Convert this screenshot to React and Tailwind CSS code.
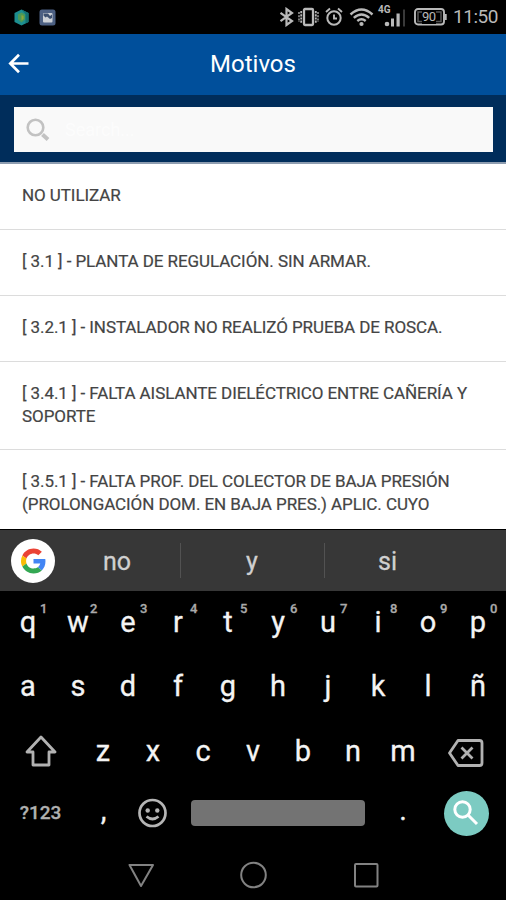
const ROWS = [
  { h: 'h-[66px]', lines: ['NO UTILIZAR'] },
  { h: 'h-[66px]', lines: ['[ 3.1 ] - PLANTA DE REGULACIÓN. SIN ARMAR.'] },
  { h: 'h-[66px]', lines: ['[ 3.2.1 ] - INSTALADOR NO REALIZÓ PRUEBA DE ROSCA.'] },
  { h: 'h-[88px]', lines: ['[ 3.4.1 ] - FALTA AISLANTE DIELÉCTRICO ENTRE CAÑERÍA Y', 'SOPORTE'] },
  { h: 'h-[79px]', last: true, lines: ['[ 3.5.1 ] - FALTA PROF. DEL COLECTOR DE BAJA PRESIÓN', '(PROLONGACIÓN DOM. EN BAJA PRES.) APLIC. CUYO'] },
];

const TOP = ['q', 'w', 'e', 'r', 't', 'y', 'u', 'i', 'o', 'p'];
const HOME = ['a', 's', 'd', 'f', 'g', 'h', 'j', 'k', 'l', 'ñ'];
const BOTTOM = ['z', 'x', 'c', 'v', 'b', 'n', 'm'];

function StatusBar() {
  return (
    <div className="flex h-[34px] items-center bg-black pl-[14px] text-[#b9b9b9]">
      <svg width="15" height="17" viewBox="0 0 15 17">
        <path d="M7.5 .5 14.5 4v9l-7 3.5-7-3.5V4z" fill="#1d8e90" />
        <path d="M7.5 .5 14.5 4v9l-3 1.5V5z" fill="#14706f" />
        <path d="M7.5 3.500 11 5.500v5l-3.500 3-3.500-3v-5z" fill="#4e9a55" />
        <path d="M7.500 6 9.500 7v3l-2 1.500z" fill="#8fa93a" />
      </svg>
      <svg className="ml-[10px]" width="17" height="17" viewBox="0 0 17 17">
        <rect x=".5" y=".5" width="16" height="16" rx="2.5" fill="#4c6083" />
        <rect x="4" y="4" width="9.500" height="9.500" rx="1" fill="#cbd0d6" />
        <path d="M4.500 4.500H9L11 7 13 5.500V9L11 10 8 7.500 6.500 8.500 4.500 6.500z" fill="#3c5070" />
      </svg>
      <svg className="ml-[223px]" width="16" height="20" viewBox="0 0 16 20" fill="none" stroke="currentColor" strokeWidth="2.200">
        <path d="M1.500 5.800 13 14 7.500 18V2L13 6 1.500 14.200" />
      </svg>
      <svg className="ml-[3px]" width="22" height="20" viewBox="0 0 22 20" fill="none" stroke="currentColor">
        <rect x="6" y="2" width="9" height="16" rx="1" strokeWidth="2.300" />
        <path d="M3.200 4v12M17.800 4v12" strokeWidth="1.800" strokeDasharray="2.200 1" />
        <path d="M1 5v10M20 5v10" strokeWidth="1.300" strokeDasharray="2 1.200" />
      </svg>
      <svg className="ml-[5px]" width="18" height="20" viewBox="0 0 18 20" fill="none" stroke="currentColor">
        <circle cx="9" cy="11" r="6.700" strokeWidth="2" />
        <path d="M9 7.500V11.500h3M1 5l4-3.500M17 5l-4-3.500" strokeWidth="1.900" />
      </svg>
      <svg className="ml-[6px]" width="25" height="20" viewBox="0 0 25 20" fill="none" stroke="currentColor" strokeWidth="2.400">
        <path d="M1.500 7.500Q12.500-2.500 23.500 7.500M4.800 10.800Q12.500 4 20.200 10.800M8.300 14Q12.500 10.500 16.700 14" />
        <circle cx="12.500" cy="17" r="2.100" fill="currentColor" stroke="none" />
      </svg>
      <div className="relative ml-[4px] h-[24px] w-[29px]">
        <span className="absolute left-0 top-0 text-[10px] font-bold leading-[9px]">4G</span>
        <svg className="absolute left-0 top-0" width="29" height="24" viewBox="0 0 29 24" fill="currentColor">
          <circle cx="9" cy="19" r="2.300" />
          <path d="M13 13.500h3v8h-3zM18.500 8.500h3.200v13h-3.200z" />
          <path d="M25 4.500h2v17h-2z" fill="#393939" />
        </svg>
      </div>
      <div className="relative ml-[7px] h-[18px] w-[33px]">
        <svg width="33" height="18" viewBox="0 0 33 18" fill="none" stroke="currentColor">
          <rect x="1" y="1" width="29" height="15.500" rx="3" strokeWidth="1.900" />
          <path d="M31.700 6v6" strokeWidth="2" />
          <path d="M4 4h23v9.500H4z" stroke="#555" strokeWidth="1.500" />
        </svg>
        <span className="absolute left-[8px] top-[2px] bg-black text-[13px] leading-[14px] tracking-[-0.5px]">90</span>
      </div>
      <span className="ml-[6px] text-[19px] leading-[34px] tracking-[-0.45px]">11:50</span>
    </div>
  );
}

function LetterRow({ letters, hints }) {
  return (
    <div className="grid h-16 grid-cols-10 px-[3px]">
      {letters.map((k, i) => (
        <div key={k} className="relative text-center text-[29px] leading-[63px]">
          {k}
          {hints && <span className="absolute left-[37px] top-[11px] text-[13px] font-medium leading-[14px] text-[#aaa]">{(i + 1) % 10}</span>}
        </div>
      ))}
    </div>
  );
}

function Keyboard() {
  return (
    <div className="bg-black text-[#f4f4f4] [-webkit-text-stroke:0.3px_currentColor]">
      <div className="flex h-[62px] items-center border-t border-black bg-[#373737] text-[25px] text-[#d0d0d0]">
        <div className="ml-[11px] flex size-[44px] items-center justify-center rounded-full bg-white">
          <svg width="25" height="26" viewBox="0 0 48 48">
            <path fill="#ea4335" d="M24 9.500c3.540 0 6.710 1.220 9.210 3.600l6.850-6.850C35.900 2.380 30.470 0 24 0 14.620 0 6.510 5.380 2.560 13.220l7.980 6.190C12.430 13.720 17.740 9.500 24 9.500z" />
            <path fill="#4285f4" d="M46.980 24.550c0-1.570-.15-3.090-.38-4.550H24v9.020h12.940c-.58 2.960-2.260 5.480-4.780 7.180l7.730 6c4.510-4.180 7.090-10.360 7.090-17.650z" />
            <path fill="#fbbc05" d="M10.530 28.590c-.48-1.450-.76-2.990-.76-4.590s.27-3.140.76-4.590l-7.980-6.190C.92 16.460 0 20.120 0 24c0 3.880.92 7.540 2.560 10.780l7.970-6.190z" />
            <path fill="#34a853" d="M24 48c6.480 0 11.930-2.130 15.890-5.810l-7.730-6c-2.150 1.450-4.920 2.300-8.160 2.300-6.260 0-11.570-4.220-13.470-9.910l-7.980 6.190C6.510 42.620 14.620 48 24 48z" />
          </svg>
        </div>
        <span className="ml-[2px] w-[123px] pr-[3px] pt-[2px] text-center">no</span>
        <span className="h-[35px] w-px bg-[#525252]" />
        <span className="w-[143px] pr-[1px] pt-[2px] text-center">y</span>
        <span className="h-[35px] w-px bg-[#525252]" />
        <span className="w-[125px] pt-[2px] text-center">si</span>
      </div>
      <LetterRow letters={TOP} hints />
      <LetterRow letters={HOME} />
      <div className="flex h-16 items-center">
        <svg className="ml-[24px]" width="34" height="34" viewBox="0 0 34 34" fill="none" stroke="#b2b2b2" strokeWidth="2.800" strokeLinejoin="round">
          <path d="M17 3 31 18H25v13H9V18H3z" />
        </svg>
        <div className="ml-[20px] grid w-[350px] grid-cols-7">
          {BOTTOM.map((k) => (
            <div key={k} className="text-center text-[29px] leading-[62px]">{k}</div>
          ))}
        </div>
        <svg className="ml-[19px] mt-[3px]" width="38" height="30" viewBox="0 0 38 30" fill="none" stroke="#b2b2b2" strokeWidth="2.800" strokeLinejoin="round">
          <path d="M11 2.500h21.500q2.500 0 2.500 2.500v20q0 2.500-2.500 2.500H11L2.500 15z" />
          <path d="m14.500 9.500 11 11M25.500 9.500l-11 11" />
        </svg>
      </div>
      <div className="flex h-[60px] items-center">
        <span className="w-[81px] text-center text-[19px] font-medium text-[#b0b0b0]">?123</span>
        <span className="w-[45px] text-center text-[29px] leading-[54px] pb-[6px]">,</span>
        <svg className="ml-[11px]" width="30" height="30" viewBox="0 0 30 30" fill="none" stroke="#b5b5b5" strokeWidth="2.700">
          <circle cx="15.500" cy="15" r="13" />
          <path d="M9.500 18.500q6 5 12 0" />
          <circle cx="10.700" cy="12.500" r="2.200" fill="#b5b5b5" stroke="none" />
          <circle cx="20.300" cy="12.500" r="2.200" fill="#b5b5b5" stroke="none" />
        </svg>
        <span className="ml-[24px] h-[26px] w-[174px] rounded-[4px] bg-[#737373]" />
        <span className="w-[76px] pb-[6px] text-center text-[29px] leading-[54px]">.</span>
        <div className="ml-[3px] flex size-[45px] items-center justify-center rounded-full bg-[#7ccbc2] pb-[1px] pr-[2px]">
          <svg width="26" height="26" viewBox="0 0 26 26" fill="none" stroke="white" strokeWidth="3">
            <circle cx="9.500" cy="9.500" r="7.700" />
            <path d="m15 15 9 9" />
          </svg>
        </div>
      </div>
      <div className="flex h-[57px] items-start pt-[18px]">
        <svg className="ml-[128px]" width="26" height="28" viewBox="0 0 26 28" fill="none" stroke="#828282" strokeWidth="2" strokeLinejoin="round">
          <path d="M1.500 4h23.500L13 25z" />
        </svg>
        <svg className="ml-[85px]" width="28" height="28" viewBox="0 0 28 28" fill="none" stroke="#828282" strokeWidth="2">
          <circle cx="14.500" cy="14" r="12.300" />
        </svg>
        <svg className="ml-[86px]" width="26" height="28" viewBox="0 0 26 28" fill="none" stroke="#828282" strokeWidth="2">
          <rect x="2" y="3" width="22.500" height="22.500" rx="1" />
        </svg>
      </div>
    </div>
  );
}

export default function App() {
  return (
    <div className="h-[900px] w-[506px] overflow-hidden bg-white font-['Roboto',sans-serif]">
      <StatusBar />
      <header className="grid h-[61px] grid-cols-[60px_1fr_60px] items-center bg-[#004f9b] text-white">
        <svg className="mb-[2px] ml-[8px]" width="22" height="22" viewBox="0 0 22 22" fill="none" stroke="white" strokeWidth="2.700">
          <path d="M20.500 10.500H2.500M11 1.800 2.300 10.500l8.700 8.700" />
        </svg>
        <h1 className="text-center text-[24px] font-normal leading-[61px]">Motivos</h1>
      </header>
      <div className="h-[69px] border-b-2 border-[#8e9db0] bg-[#002d5b] px-[14px] pt-[12px]">
        <div className="flex h-[45px] w-[479px] items-center bg-[#f9f9f9] text-white">
          <svg className="ml-[12px] mt-[1px]" width="24" height="24" viewBox="0 0 24 24" fill="none" stroke="#c2c2c2">
            <circle cx="9.500" cy="9.500" r="7.800" strokeWidth="2.600" />
            <path d="m16.500 16.500 5.500 5" strokeWidth="4" />
          </svg>
          <span className="ml-[15px] text-[18px] opacity-60">Search...</span>
        </div>
      </div>
      <ul>
        {ROWS.map((r) => (
          <li key={r.lines[0]} className={`${r.h} ${r.last ? '' : 'border-b border-[#dcdcdc]'} whitespace-nowrap pl-[22px] pt-[20px] text-[17px] leading-[22.5px] tracking-[-0.075px] text-[#444] [-webkit-text-stroke:0.2px_currentColor]`}>
            {r.lines.map((t) => <div key={t}>{t}</div>)}
          </li>
        ))}
      </ul>
      <Keyboard />
    </div>
  );
}
